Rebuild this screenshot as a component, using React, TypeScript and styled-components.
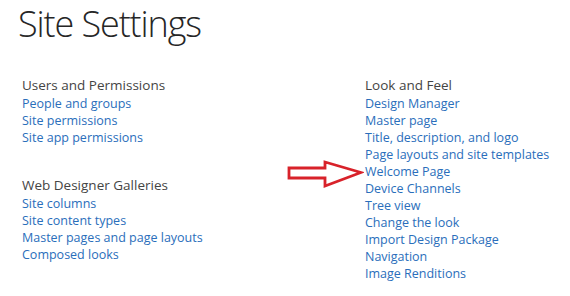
import styled, { createGlobalStyle } from 'styled-components'

const GlobalStyle = createGlobalStyle`
  body {
    margin: 0;
    background: #fff;
    font-family: 'Open Sans', 'Noto Sans', sans-serif;
  }
`

const Page = styled.div`
  width: 570px;
  height: 296px;
  overflow: hidden;
  padding: 2px 0 0 18px;
  box-sizing: border-box;
`

const Title = styled.h1`
  margin: 0;
  font-size: 36px;
  font-weight: 300;
  line-height: 44px;
  color: #262626;
  letter-spacing: -1.1px;
`

const Columns = styled.div`
  display: grid;
  grid-template-columns: 343px 1fr;
  margin-top: 30px;
  padding-left: 4px;
`

const Column = styled.div`
  display: flex;
  flex-direction: column;
  gap: 30px;
`

const Section = styled.section`
  display: flex;
  flex-direction: column;
`

const Heading = styled.h3`
  margin: 0 0 1px;
  font-size: 13.5px;
  font-weight: 400;
  line-height: 18px;
  color: #444;
`

const LinkItem = styled.a`
  position: relative;
  display: block;
  width: fit-content;
  font-size: 12.5px;
  line-height: 17px;
  color: #2a6ebb;
  text-decoration: none;
`

const Pointer = styled.svg`
  position: absolute;
  right: 100%;
  top: -3px;
  margin-right: 1px;
`

type Group = { heading: string; links: string[] }

const LEFT: Group[] = [
  {
    heading: 'Users and Permissions',
    links: ['People and groups', 'Site permissions', 'Site app permissions'],
  },
  {
    heading: 'Web Designer Galleries',
    links: ['Site columns', 'Site content types', 'Master pages and page layouts', 'Composed looks'],
  },
]

const RIGHT: Group[] = [
  {
    heading: 'Look and Feel',
    links: [
      'Design Manager',
      'Master page',
      'Title, description, and logo',
      'Page layouts and site templates',
      'Welcome Page',
      'Device Channels',
      'Tree view',
      'Change the look',
      'Import Design Package',
      'Navigation',
      'Image Renditions',
    ],
  },
]

function Arrow() {
  return (
    <Pointer width="78" height="30" viewBox="0 0 78 30">
      <path
        d="M3 8 H39 V2 L75 12.5 L39 26 V18 H3 Z"
        fill="none"
        stroke="#d8222a"
        strokeWidth="2.8"
      />
    </Pointer>
  )
}

function SettingsColumn({ groups }: { groups: Group[] }) {
  return (
    <Column>
      {groups.map(({ heading, links }) => (
        <Section key={heading}>
          <Heading>{heading}</Heading>
          {links.map((link) => (
            <LinkItem key={link} href="#">
              {link === 'Welcome Page' && <Arrow />}
              {link}
            </LinkItem>
          ))}
        </Section>
      ))}
    </Column>
  )
}

export default function App() {
  return (
    <>
      <GlobalStyle />
      <Page>
        <Title>Site Settings</Title>
        <Columns>
          <SettingsColumn groups={LEFT} />
          <SettingsColumn groups={RIGHT} />
        </Columns>
      </Page>
    </>
  )
}
